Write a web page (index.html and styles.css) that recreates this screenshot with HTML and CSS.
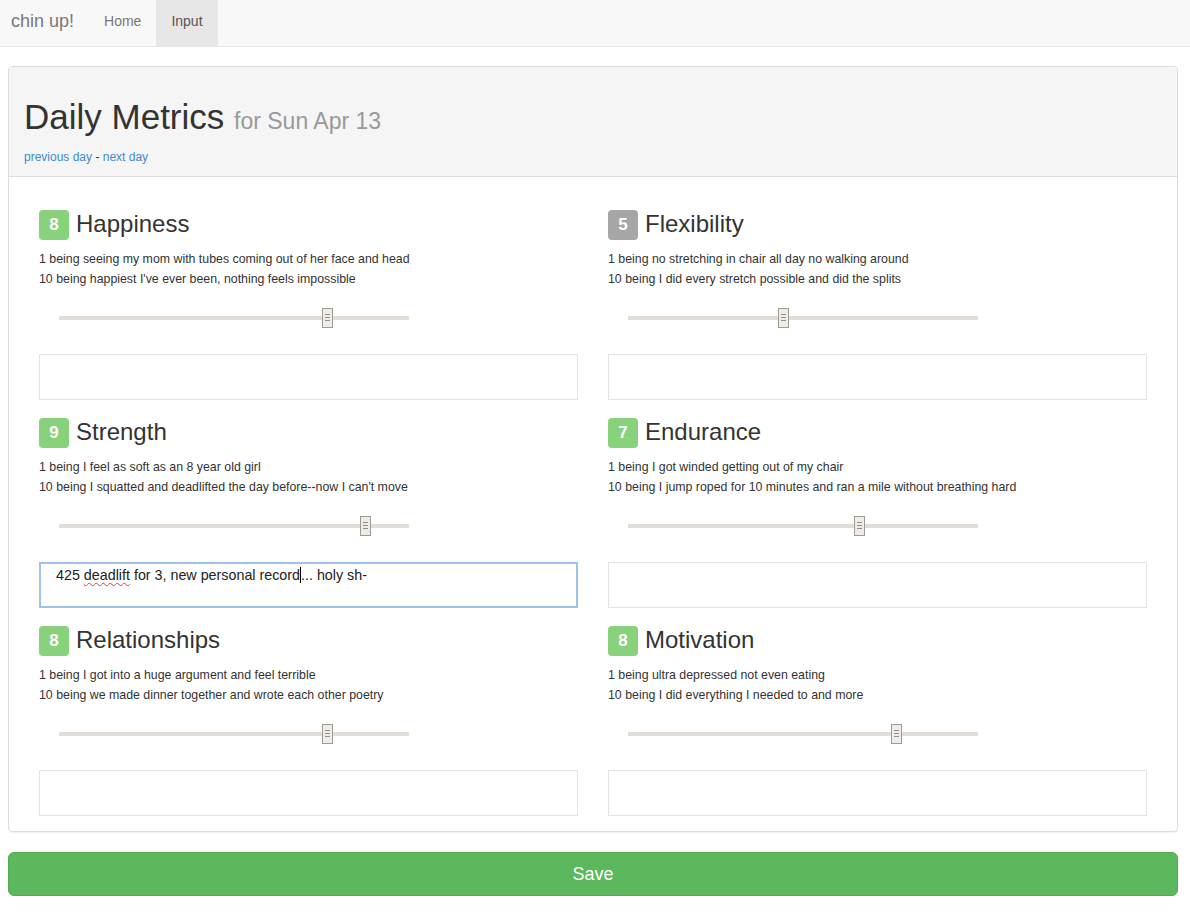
FILE: index.html
```html
<!DOCTYPE html>
<html lang="en">
<head>
<meta charset="utf-8">
<title>chin up! - Input</title>
<link rel="stylesheet" href="styles.css">
</head>
<body>
<nav class="navbar">
  <a class="brand" href="#">chin up!</a>
  <ul class="nav">
    <li><a href="#">Home</a></li>
    <li class="active"><a href="#">Input</a></li>
  </ul>
</nav>

<main class="wrap">
  <section class="panel">
    <header class="panel-heading">
      <h1>Daily Metrics <small>for Sun Apr 13</small></h1>
      <p class="daynav"><a href="#">previous day</a> - <a href="#">next day</a></p>
    </header>
    <div class="panel-body">
      <div class="metric">
        <div class="title"><span class="badge">8</span><h3>Happiness</h3></div>
        <p class="desc">1 being seeing my mom with tubes coming out of her face and head<br>10 being happiest I've ever been, nothing feels impossible</p>
        <div class="slider"><div class="track"></div><div class="handle" style="left:263px"></div></div>
        <div class="note"></div>
      </div>
      <div class="metric">
        <div class="title"><span class="badge gray">5</span><h3>Flexibility</h3></div>
        <p class="desc">1 being no stretching in chair all day no walking around<br>10 being I did every stretch possible and did the splits</p>
        <div class="slider"><div class="track"></div><div class="handle" style="left:150px"></div></div>
        <div class="note"></div>
      </div>
      <div class="metric">
        <div class="title"><span class="badge">9</span><h3>Strength</h3></div>
        <p class="desc">1 being I feel as soft as an 8 year old girl<br>10 being I squatted and deadlifted the day before--now I can't move</p>
        <div class="slider"><div class="track"></div><div class="handle" style="left:301px"></div></div>
        <div class="note focused">425 <span class="typo">deadlift</span> for 3, new personal record<span class="caret"></span>... holy sh-</div>
      </div>
      <div class="metric">
        <div class="title"><span class="badge">7</span><h3>Endurance</h3></div>
        <p class="desc">1 being I got winded getting out of my chair<br>10 being I jump roped for 10 minutes and ran a mile without breathing hard</p>
        <div class="slider"><div class="track"></div><div class="handle" style="left:226px"></div></div>
        <div class="note"></div>
      </div>
      <div class="metric">
        <div class="title"><span class="badge">8</span><h3>Relationships</h3></div>
        <p class="desc">1 being I got into a huge argument and feel terrible<br>10 being we made dinner together and wrote each other poetry</p>
        <div class="slider"><div class="track"></div><div class="handle" style="left:263px"></div></div>
        <div class="note"></div>
      </div>
      <div class="metric">
        <div class="title"><span class="badge">8</span><h3>Motivation</h3></div>
        <p class="desc">1 being ultra depressed not even eating<br>10 being I did everything I needed to and more</p>
        <div class="slider"><div class="track"></div><div class="handle" style="left:263px"></div></div>
        <div class="note"></div>
      </div>
    </div>
  </section>
  <button class="save" type="button">Save</button>
</main>
</body>
</html>
```

FILE: styles.css
```css
* { box-sizing: border-box; }

body {
  margin: 0;
  font-family: "Liberation Sans", Arial, sans-serif;
  font-size: 14px;
  line-height: 20px;
  color: #333;
  background: #fff;
}

a { color: #428bca; text-decoration: none; }

.navbar {
  display: flex;
  height: 47px;
  background: #f8f8f8;
  border-bottom: 1px solid #e7e7e7;
  margin-bottom: 19px;
}

.brand {
  display: block;
  padding: 11px 15px 0 11px;
  font-size: 18px;
  line-height: 20px;
  color: #777;
}

.nav {
  display: flex;
  list-style: none;
  margin: 0;
  padding: 0;
}

.nav a {
  display: block;
  height: 46px;
  padding: 11px 15px 0;
  color: #777;
  line-height: 20px;
}

.nav .active a {
  background: #e7e7e7;
  color: #555;
}

.wrap {
  margin: 0 12px 0 8px;
}

.panel {
  border: 1px solid #ddd;
  border-radius: 4px;
  box-shadow: 0 1px 1px rgba(0,0,0,0.05);
}

.panel-heading {
  background: #f5f5f5;
  border-bottom: 1px solid #ddd;
  border-radius: 3px 3px 0 0;
  padding: 10px 15px 10px;
}

.panel-heading h1 {
  margin: 21px 0 12px;
  font-size: 35px;
  line-height: 1.1;
  font-weight: 500;
  color: #333;
}

.panel-heading h1 small {
  font-size: 23px;
  line-height: 1.1;
  color: #999;
  font-weight: normal;
}

.daynav {
  margin: 0;
  font-size: 12px;
  line-height: 17px;
}

.panel-body {
  display: grid;
  grid-template-columns: 1fr 1fr;
  row-gap: 18px;
  padding: 33px 15px 15px;
}

.metric {
  padding: 0 15px;
}

.title {
  display: flex;
  align-items: flex-start;
  gap: 7px;
  height: 30px;
}

.badge {
  width: 30px;
  height: 30px;
  border-radius: 4px;
  background: #88d27c;
  color: #fff;
  font-weight: bold;
  font-size: 17px;
  line-height: 30px;
  text-align: center;
}

.badge.gray { background: #a6a6a6; }

.title h3 {
  margin: 0;
  font-size: 24px;
  line-height: 28px;
  font-weight: 500;
  color: #333;
}

.desc {
  margin: 9px 0 0;
  font-size: 12.35px;
  line-height: 20px;
  color: #333;
}

.slider {
  position: relative;
  margin: 19px 0 0 20px;
  padding-top: 8px;
  width: 350px;
  height: 20px;
}

.track {
  height: 4px;
  background: #e3ded7;
}

.handle {
  position: absolute;
  top: 0;
  width: 11px;
  height: 20px;
  background: #efebe7;
  border: 1px solid #a09a92;
}

.handle::before {
  content: "";
  position: absolute;
  left: 2px;
  top: 5px;
  width: 5px;
  height: 1px;
  background: #928c85;
  box-shadow: 0 3px 0 #928c85, 0 6px 0 #928c85;
}

.note {
  margin-top: 26px;
  height: 46px;
  border: 1px solid #e3e3e3;
  padding: 2px 16px;
  font-size: 14.3px;
  line-height: 20px;
  color: #333;
}

.note.focused {
  border: 2px solid #9ec1f2;
  padding: 1px 15px;
  color: #222;
}

.typo {
  text-decoration: underline wavy #e23b3b;
  text-decoration-thickness: 1px;
  text-underline-offset: 2px;
}

.caret {
  display: inline-block;
  width: 1px;
  height: 16px;
  background: #000;
  vertical-align: -3px;
}

.save {
  display: block;
  width: 100%;
  margin-top: 20px;
  height: 44px;
  border: 1px solid #4cae4c;
  border-radius: 6px;
  background: #5cb85c;
  color: #fff;
  font-family: "Liberation Sans", Arial, sans-serif;
  font-size: 18px;
  line-height: 24px;
  padding: 9px 16px;
}
```
